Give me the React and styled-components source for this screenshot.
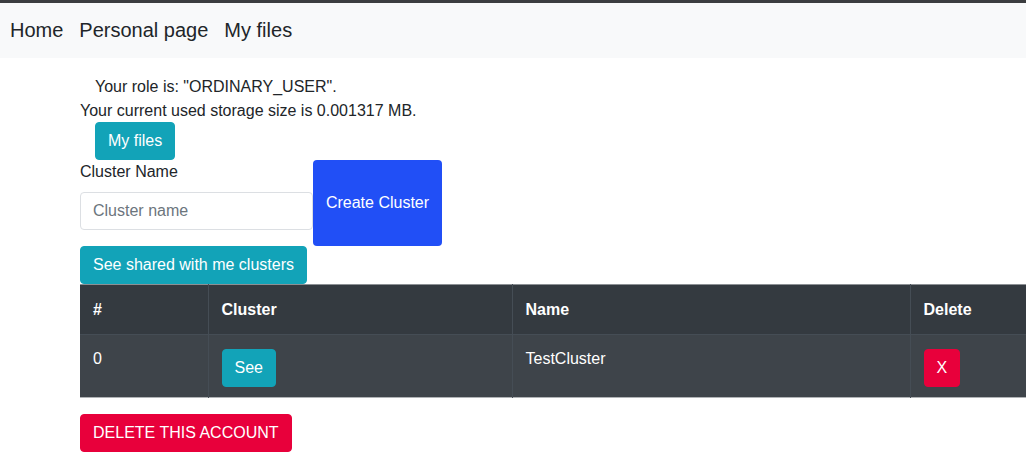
import React from "react";
import styled, { createGlobalStyle } from "styled-components";

const Global = createGlobalStyle`
  html, body { margin: 0; padding: 0; background: #fff; overflow: hidden; }
  body { font-family: "Liberation Sans", Arial, sans-serif; color: #212529; font-size: 16px; line-height: 1.5; }
  * { box-sizing: border-box; }
`;

const Nav = styled.nav`
  height: 58px;
  border-top: 3px solid #3b3d40;
  background: #f8f9fa;
  display: flex;
  align-items: center;
  gap: 16px;
  padding: 0 10px 1px;
`;

const NavLink = styled.a`
  font-size: 20px;
  color: #212529;
  text-decoration: none;
  line-height: 30px;
`;

const Main = styled.main`
  padding: 17px 0 0 80px;
  display: flex;
  flex-direction: column;
  align-items: flex-start;
`;

const Line = styled.div`
  line-height: 24px;
  padding-left: ${(p) => p.$indent || 0}px;
`;

const Btn = styled.button`
  font-family: "Liberation Sans", Arial, sans-serif;
  font-size: 16px;
  line-height: 24px;
  padding: 6px 12px;
  border: 1px solid ${(p) => p.$bg};
  border-radius: 4px;
  background: ${(p) => p.$bg};
  color: #fff;
  cursor: pointer;
  margin-left: ${(p) => p.$ml || 0}px;
  margin-top: ${(p) => p.$mt || 0}px;
`;

const FormRow = styled.div`
  display: flex;
  align-items: flex-start;
`;

const Field = styled.div`
  display: flex;
  flex-direction: column;
`;

const Label = styled.label`
  line-height: 24px;
  margin-bottom: 8px;
`;

const Input = styled.input`
  width: 233px;
  height: 38px;
  padding: 6px 12px;
  font-family: "Liberation Sans", Arial, sans-serif;
  font-size: 16px;
  border: 1px solid #dcdfe3;
  border-radius: 4px;
  color: #495057;
  &::placeholder { color: #6c757d; }
`;

const BigBtn = styled.button`
  width: 129px;
  height: 86px;
  background: #214ff6;
  border: none;
  border-radius: 4px;
  color: #fff;
  font-family: "Liberation Sans", Arial, sans-serif;
  font-size: 16px;
  padding: 0;
`;

const Table = styled.table`
  width: calc(100vw - 80px);
  border-collapse: collapse;
  color: #fff;
  border-top: 1px solid #8c9094;
  border-bottom: 1px solid #b0b3b6;
`;

const Th = styled.th`
  background: #343a40;
  text-align: left;
  font-weight: bold;
  padding: 12px 12px 12px 13px;
  height: 50px;
  line-height: 24px;
  border-left: 1px solid #454d55;
  border-bottom: 1px solid #454d55;
  width: ${(p) => (p.$w ? `${p.$w}px` : "auto")};
  &:first-child { border-left: none; }
`;

const Td = styled.td`
  background: #3e444a;
  vertical-align: top;
  padding: 12px 12px 10px 13px;
  height: 62px;
  line-height: 24px;
  border-left: 1px solid #454d55;
  &:first-child { border-left: none; }
`;

const SmallBtn = styled(Btn)`
  display: block;
  margin-top: 2px;
`;

export default function App() {
  return (
    <>
      <Global />
      <Nav>
        <NavLink href="#">Home</NavLink>
        <NavLink href="#">Personal page</NavLink>
        <NavLink href="#">My files</NavLink>
      </Nav>
      <Main>
        <Line $indent={15}>Your role is: "ORDINARY_USER".</Line>
        <Line>Your current used storage size is 0.001317 MB.</Line>
        <Btn $bg="#12a3b8" $ml={15} $mt={-1}>My files</Btn>
        <FormRow>
          <Field>
            <Label>Cluster Name</Label>
            <Input placeholder="Cluster name" />
          </Field>
          <BigBtn>Create Cluster</BigBtn>
        </FormRow>
        <Btn $bg="#12a3b8">See shared with me clusters</Btn>
        <Table>
          <thead>
            <tr>
              <Th $w={128}>#</Th>
              <Th $w={304}>Cluster</Th>
              <Th $w={398}>Name</Th>
              <Th>Delete</Th>
            </tr>
          </thead>
          <tbody>
            <tr>
              <Td>0</Td>
              <Td><SmallBtn $bg="#12a3b8">See</SmallBtn></Td>
              <Td>TestCluster</Td>
              <Td><SmallBtn $bg="#e8003b">X</SmallBtn></Td>
            </tr>
          </tbody>
        </Table>
        <Btn $bg="#e8003b" $mt={16}>DELETE THIS ACCOUNT</Btn>
      </Main>
    </>
  );
}
